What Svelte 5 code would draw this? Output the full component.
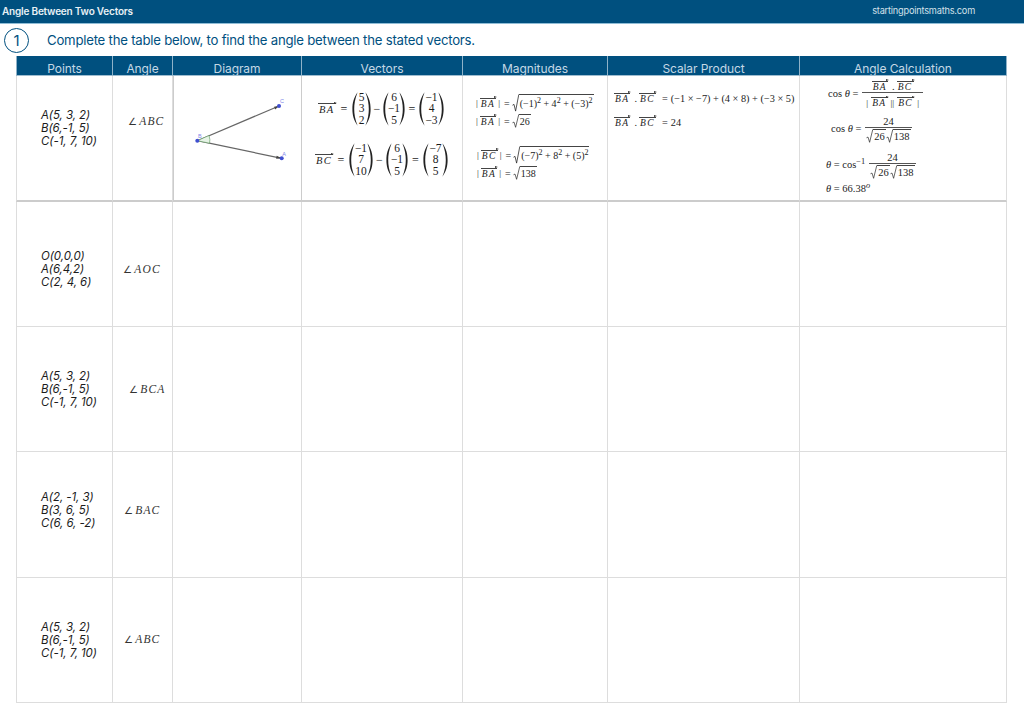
<script>
  const heads = ['Points', 'Angle', 'Diagram', 'Vectors', 'Magnitudes', 'Scalar Product', 'Angle Calculation'];
  const rows = [
    { pts: ['A(5, 3, 2)', 'B(6,-1, 5)', 'C(-1, 7, 10)'], ang: 'ABC', top: 33, angTop: 39, angLeft: 15, h: 126, math: true },
    { pts: ['O(0,0,0)', 'A(6,4,2)', 'C(2, 4, 6)'], ang: 'AOC', top: 48, angTop: 61, angLeft: 10, h: 125 },
    { pts: ['A(5, 3, 2)', 'B(6,-1, 5)', 'C(-1, 7, 10)'], ang: 'BCA', top: 43, angTop: 56, angLeft: 16, h: 125 },
    { pts: ['A(2, -1, 3)', 'B(3, 6, 5)', 'C(6, 6, -2)'], ang: 'BAC', top: 39, angTop: 52, angLeft: 11, h: 126 },
    { pts: ['A(5, 3, 2)', 'B(6,-1, 5)', 'C(-1, 7, 10)'], ang: 'ABC', top: 43, angTop: 55, angLeft: 11, h: 125 }
  ];
  const gridRows = '20px ' + rows.map((r) => r.h + 'px').join(' ');
</script>

{#snippet vec(t)}<span class="vec">{t}</span>{/snippet}

{#snippet paren(flip)}
  <svg class="paren" class:flip viewBox="0 0 6 34" aria-hidden="true">
    <path d="M5.600 .3C1.600 6 .4 11 .4 17s1.200 11 5.200 16.700C3 27 2.200 22 2.200 17S3 7 5.600 .3Z" />
  </svg>
{/snippet}

{#snippet matrix(vals, w)}
  <span class="matrix">
    {@render paren(false)}
    <span class="mcol" style:width={w + 'px'}>{#each vals as v}<span>{v}</span>{/each}</span>
    {@render paren(true)}
  </span>
{/snippet}

{#snippet eq(name, pad, o1, m1, w1, o2, m2, w2, o3, m3, w3)}
  <div class="eq" style:padding-left={pad + 'px'}>
    {@render vec(name)}
    <span class="op" style:width={o1 + 'px'}>=</span>
    {@render matrix(m1, w1)}
    <span class="op" style:width={o2 + 'px'}>−</span>
    {@render matrix(m2, w2)}
    <span class="op" style:width={o3 + 'px'}>=</span>
    {@render matrix(m3, w3)}
  </div>
{/snippet}

{#snippet rad(content, tall)}
  <span class="rad" class:tall>
    <svg class="radsign" viewBox="0 0 7 20" preserveAspectRatio="none" aria-hidden="true">
      <path d="M.5 12.500 L2 11.500 L3.600 19 L6.800 .5" />
    </svg>
    <span class="radicand">{@render content()}</span>
  </span>
{/snippet}

{#snippet s26()}26{/snippet}
{#snippet s138()}138{/snippet}
{#snippet m1()}(−1)<sup>2</sup> + 4<sup>2</sup> + (−3)<sup>2</sup>{/snippet}
{#snippet m2()}(−7)<sup>2</sup> + 8<sup>2</sup> + (5)<sup>2</sup>{/snippet}

{#snippet mag(name, content, pad, tall)}
  <div class="magrow" style:padding-left={pad + 'px'}>
    <span class="bar">|</span>{@render vec(name)}<span class="bar">|</span><span class="meq">=</span>{@render rad(content, tall)}
  </div>
{/snippet}

{#snippet roots()}
  {@render rad(s26, false)}{@render rad(s138, false)}
{/snippet}

<header class="topbar">
  <span class="title">Angle Between Two Vectors</span>
  <span class="site">startingpointsmaths.com</span>
</header>

<div class="prompt">
  <span class="num">1</span>
  <span class="ptext">Complete the table below, to find the angle between the stated vectors.</span>
</div>

<div class="table" style:grid-template-rows={gridRows}>
  {#each heads as h}
    <div class="th">{h}</div>
  {/each}

  {#each rows as r}
    <div class="td points" class:first={r.math} style:padding-top={r.top + 'px'}>
      {#each r.pts as p}<div>{p}</div>{/each}
    </div>
    <div class="td angle" class:first={r.math} style:padding-top={r.angTop + 'px'} style:padding-left={r.angLeft + 'px'}>
      <span class="ang">∠</span><span class="angname">{r.ang}</span>
    </div>
    {#if r.math}
      <div class="td diagram first">
        <svg class="geo" viewBox="0 0 127 124" aria-hidden="true">
          <path class="seg" d="M23.300 64.700L105 30" />
          <path class="seg" d="M23.300 64.700L107.700 82.300" />
          <path class="head" d="M105 30l-5 .7 1.200 2.800Z" />
          <path class="head" d="M107.700 82.300l-5-2.500-.6 3Z" />
          <path class="mark" d="M23.300 64.700L35 59.500Q36.500 64 35.500 67.200Z" />
          <circle cx="23.300" cy="64.700" r="2" />
          <circle cx="105" cy="30" r="2" />
          <circle cx="107.700" cy="82.300" r="2" />
          <text x="24" y="62">B</text>
          <text x="106" y="27">C</text>
          <text x="108.300" y="79.500">A</text>
        </svg>
      </div>
      <div class="td vectors first">
        {@render eq('BA', 16, 16, ['5', '3', '2'], 7, 12, ['6', '−1', '5'], 10, 14, ['−1', '4', '−3'], 13)}
        {@render eq('BC', 13, 16, ['−1', '7', '10'], 12, 13, ['6', '−1', '5'], 10, 15, ['−7', '8', '5'], 13)}
      </div>
      <div class="td mags first">
        {@render mag('BA', m1, 11, true)}
        {@render mag('BA', s26, 11, false)}
        <div class="magspace"></div>
        {@render mag('BC', m2, 12, true)}
        {@render mag('BA', s138, 12, false)}
      </div>
      <div class="td scalar first">
        <div class="sline">{@render vec('BA')}<span class="dot">.</span>{@render vec('BC')}<span class="seq">=</span><span>(−1 × −7) + (4 × 8) + (−3 × 5)</span></div>
        <div class="sline">{@render vec('BA')}<span class="dot">.</span>{@render vec('BC')}<span class="seq">=</span><span>24</span></div>
      </div>
      <div class="td calc first">
        <div class="cline one">
          <span class="lhs">cos <i>θ</i> =</span>
          <span class="frac">
            <span class="fnum">{@render vec('BA')}<span class="dot">.</span>{@render vec('BC')}</span>
            <span class="fden wide"><span class="bar">|</span>{@render vec('BA')}<span class="bar">||</span>{@render vec('BC')}<span class="bar">|</span></span>
          </span>
        </div>
        <div class="cline two">
          <span class="lhs">cos <i>θ</i> =</span>
          <span class="frac"><span class="fnum">24</span><span class="fden">{@render roots()}</span></span>
        </div>
        <div class="cline three">
          <span class="lhs"><i>θ</i> = cos<sup>−1</sup></span>
          <span class="frac"><span class="fnum">24</span><span class="fden">{@render roots()}</span></span>
        </div>
        <div class="cline four"><span><i>θ</i> = 66.38<sup><i>o</i></sup></span></div>
      </div>
    {:else}
      {#each [0, 1, 2, 3, 4] as _}
        <div class="td"></div>
      {/each}
    {/if}
  {/each}
</div>

<style>
  :global(body) {
    background: #fff;
  }
  .topbar {
    height: 24px;
    box-sizing: border-box;
    background: #00507f;
    border-bottom: 1px solid #8fbdd6;
    display: flex;
    align-items: center;
    justify-content: space-between;
    padding: 0 49px 2px 2px;
    font-family: Inter, 'Liberation Sans', sans-serif;
    color: #e8f0f5;
  }
  .title {
    font-weight: 600;
    font-size: 10px;
    letter-spacing: -0.200px;
  }
  .site {
    color: #d5e2ea;
    font-size: 9.200px;
    letter-spacing: -0.200px;
  }
  .prompt {
    height: 32px;
    display: flex;
    align-items: center;
    padding-left: 4px;
    font-family: Inter, 'Liberation Sans', sans-serif;
  }
  .num {
    width: 25px;
    height: 25px;
    box-sizing: border-box;
    border: 1.200px solid #00507f;
    border-radius: 50%;
    display: flex;
    align-items: center;
    justify-content: center;
    font-size: 15px;
    color: #00507f;
  }
  .ptext {
    margin-left: 18px;
    font-size: 13.200px;
    letter-spacing: -0.230px;
    color: #00507f;
  }
  .table {
    margin-left: 16px;
    width: 991px;
    display: grid;
    grid-template-columns: 97px 60px 129px 161px 145px 192px 207px;
    box-sizing: border-box;
    font-family: 'Liberation Serif', 'Times New Roman', serif;
    color: #1c1c1c;
  }
  .th {
    background: #00507f;
    color: #c4d8e5;
    border-right: 1px solid #8fb2c8;
    border-bottom: 1px solid #9fbdd0;
    font-family: Inter, 'Liberation Sans', sans-serif;
    font-size: 12px;
    letter-spacing: -0.080px;
    text-align: center;
    line-height: 26px;
    height: 20px;
    box-sizing: border-box;
    overflow: hidden;
  }
  .th:nth-child(1) {
    border-left: 1px solid #8fb2c8;
  }
  .td {
    border-right: 1px solid #ddd;
    border-bottom: 1px solid #ddd;
    box-sizing: border-box;
    min-width: 0;
    overflow: hidden;
  }
  .td:nth-child(7n + 1) {
    border-left: 1px solid #ddd;
  }
  .td.first {
    border-bottom: 2px solid #ccc;
  }
  .points {
    font-family: Inter, 'Liberation Sans', sans-serif;
    font-style: italic;
    font-size: 11.500px;
    letter-spacing: -0.080px;
    line-height: 13px;
    padding-left: 24px;
  }
  .angle {
    font-size: 11.500px;
    line-height: 13px;
    font-style: italic;
    letter-spacing: 1.200px;
    color: #333;
    white-space: nowrap;
  }
  .ang {
    font-style: normal;
    font-family: 'DejaVu Sans', sans-serif;
    font-size: 10px;
    margin-right: 1px;
  }
  .diagram {
    border-left: 1px solid #ccc;
    border-right: 1px solid #ccc;
  }
  .geo {
    display: block;
    width: 127px;
    height: 124px;
  }
  .seg {
    stroke: #666;
    stroke-width: 1.200;
    fill: none;
  }
  .head {
    fill: #444;
  }
  .mark {
    fill: #e6f3e6;
    stroke: #5a9a5a;
    stroke-width: 0.600;
  }
  .geo circle {
    fill: #3f4fd0;
  }
  .geo text {
    font-family: 'Liberation Sans', Arial, sans-serif;
    font-size: 5.500px;
    fill: #7f88e8;
  }
  .vectors {
    padding-top: 16px;
    display: flex;
    flex-direction: column;
    gap: 17px;
    font-size: 11.500px;
  }
  .eq {
    display: flex;
    align-items: center;
    height: 34px;
  }
  .eq .vec {
    width: 18px;
    box-sizing: border-box;
    flex: none;
    font-size: 10.500px;
    line-height: 11px;
  }
  .op {
    text-align: center;
    flex: none;
    font-size: 12px;
  }
  .matrix {
    display: flex;
    flex: none;
    align-items: stretch;
    height: 34px;
  }
  .paren {
    width: 6px;
    height: 34px;
    flex: none;
    fill: #222;
  }
  .paren.flip {
    transform: scaleX(-1);
  }
  .mcol {
    display: flex;
    flex-direction: column;
    justify-content: center;
    align-items: center;
    line-height: 11.300px;
  }
  .vec {
    display: inline-block;
    position: relative;
    font-style: italic;
    letter-spacing: 1.400px;
    border-top: 1px solid #444;
    line-height: 10px;
    font-size: 9.500px;
    padding: 0 1px;
    white-space: nowrap;
  }
  .vec::after {
    content: '';
    position: absolute;
    right: -1px;
    top: -2.500px;
    border-left: 3px solid #333;
    border-top: 1.500px solid transparent;
    border-bottom: 1.500px solid transparent;
  }
  .mags {
    padding-top: 18px;
    font-size: 10px;
  }
  .magrow {
    height: 18px;
    display: flex;
    align-items: center;
    white-space: nowrap;
  }
  .magspace {
    height: 16px;
  }
  .bar {
    margin: 0 2px;
    font-size: 9px;
  }
  .meq {
    margin: 0 2px;
  }
  .rad {
    display: inline-flex;
    align-items: flex-start;
    line-height: 13px;
    vertical-align: middle;
  }
  .radsign {
    width: 7px;
    flex: none;
    height: 14px;
    fill: none;
    stroke: #222;
    stroke-width: 0.800;
  }
  .rad.tall {
    line-height: 17px;
  }
  .rad.tall .radsign {
    height: 18px;
  }
  .radicand {
    border-top: 1px solid #444;
    white-space: nowrap;
    padding: 0 1px;
  }
  sup {
    font-size: 80%;
    line-height: 0;
    vertical-align: 4px;
  }
  .scalar {
    padding: 10px 0 0 6px;
    font-size: 10.300px;
  }
  .sline {
    height: 24px;
    display: flex;
    align-items: center;
    white-space: nowrap;
  }
  .dot {
    margin: 0 2px 0 4px;
  }
  .seq {
    margin: 0 3px 0 6px;
  }
  .calc {
    font-size: 10.500px;
    padding-top: 2px;
  }
  .cline {
    display: flex;
    align-items: center;
    white-space: nowrap;
    height: 30px;
  }
  .one {
    padding-left: 28px;
  }
  .two {
    padding-left: 31px;
    margin-top: 5px;
  }
  .three {
    padding-left: 26px;
    margin-top: 6px;
  }
  .cline.four {
    padding-left: 26px;
    height: 14px;
    margin-top: 2px;
  }
  .lhs {
    margin-right: 4px;
  }
  .frac {
    display: inline-flex;
    flex-direction: column;
    align-items: center;
  }
  .fnum {
    display: flex;
    align-items: center;
    justify-content: center;
    height: 14px;
    padding: 0 3px;
    position: relative;
    top: 1px;
  }
  .fden {
    display: flex;
    align-items: flex-end;
    justify-content: center;
    border-top: 1px solid #555;
    align-self: stretch;
    height: 16px;
    box-sizing: border-box;
    padding: 0 1px;
  }
  .fden.wide .bar {
    margin: 0 3px;
  }
</style>
